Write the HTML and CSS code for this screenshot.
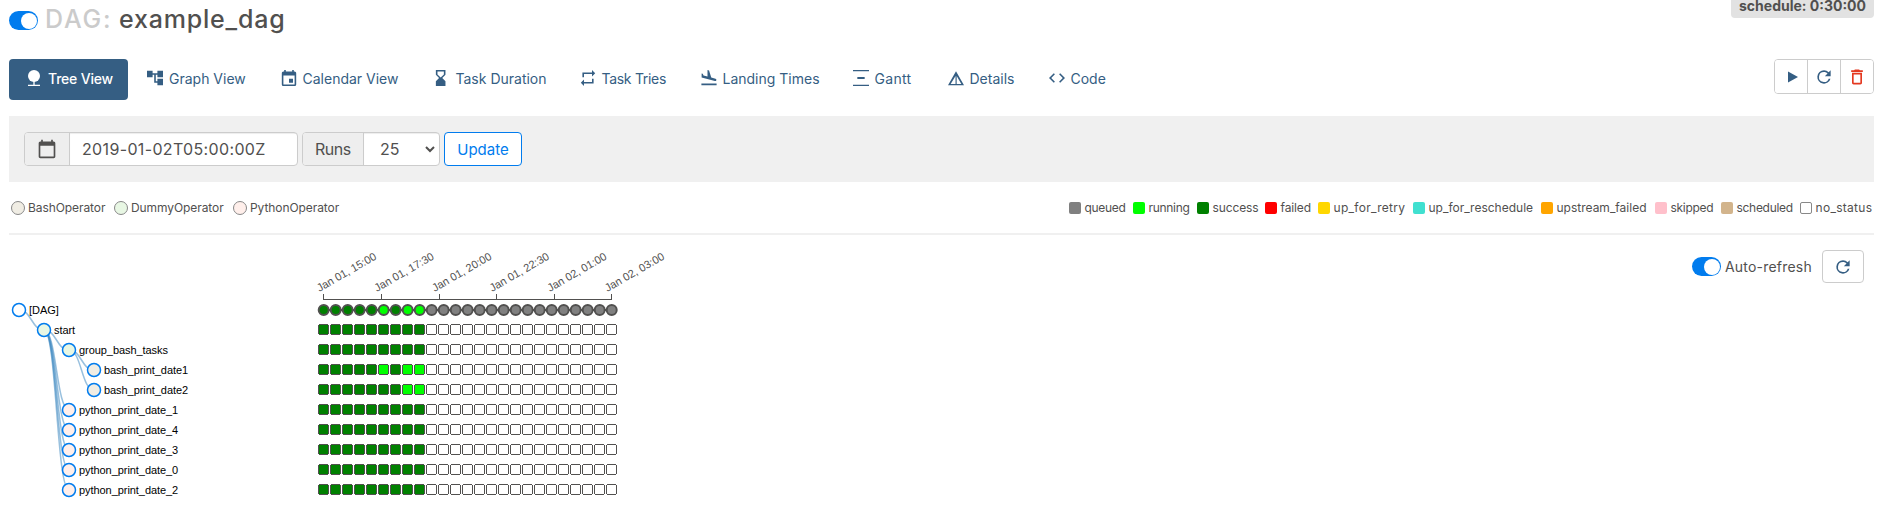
FILE: index.html
```html
<!DOCTYPE html>
<html lang="en">
<head>
<meta charset="utf-8">
<title>example_dag - Tree View</title>
<link rel="stylesheet" href="styles.css">
</head>
<body>
<header class="page-head">
  <h1 class="title"><span class="switch"></span><span class="title-kind">DAG:</span><span class="title-name">example_dag</span></h1>
  <span class="schedule"><b>schedule: 0:30:00</b></span>
</header>
<div class="nav-row">
  <nav class="tabs">
    <a class="tab active"><svg class="ic" viewBox="0 0 24 24"><circle cx="12" cy="9" r="9"/><path d="M11 16h2v6h8v2H3v-2h8z"/></svg><span>Tree View</span></a>
    <a class="tab"><svg class="ic" viewBox="0 0 24 24"><path d="M22 11V3h-7v3H9V3H2v8h7V8h2v10h4v3h7v-8h-7v3h-2V8h2v3z" transform="translate(-2.4 -2.4) scale(1.2)"/></svg><span>Graph View</span></a>
    <a class="tab"><svg class="ic" viewBox="0 0 24 24"><path d="M17 12h-5v5h5v-5zM16 1v2H8V1H6v2H5c-1.11 0-1.99.9-1.99 2L3 19c0 1.1.89 2 2 2h14c1.1 0 2-.9 2-2V5c0-1.1-.9-2-2-2h-1V1h-2zm3 18H5V8h14v11z" transform="translate(-2.4 -1.2) scale(1.2)"/></svg><span>Calendar View</span></a>
    <a class="tab"><svg class="ic" viewBox="0 0 24 24"><path d="M6 2v6h.01L6 8.010 10 12l-4 4 .01.01H6V22h12v-5.990h-.01L18 16l-4-4 4-3.990-.01-.01H18V2H6zm10 5.500-4 4-4-4V4h8z" transform="translate(-4.400 -2.400) scale(1.200)"/></svg><span>Task Duration</span></a>
    <a class="tab tighter"><svg class="ic" viewBox="0 0 24 24"><path d="M7 7h10v3l4-4-4-4v3H5v6h2V7zm10 10H7v-3l-4 4 4 4v-3h12v-6h-2v4z" transform="translate(-2.400 -2.400) scale(1.200)"/></svg><span>Task Tries</span></a>
    <a class="tab"><svg class="ic" viewBox="0 0 24 24"><path d="M2.500 19h19v2h-19v-2zm16.840-3.150c.8.210 1.620-.260 1.840-1.060.210-.8-.260-1.620-1.060-1.840l-5.310-1.420-2.760-9.020L10.120 2v8.280L5.150 8.950l-.930-2.320-1.450-.390v5.170l16.570 4.440z" transform="translate(-2.400 -2.400) scale(1.200)"/></svg><span>Landing Times</span></a>
    <a class="tab loose"><svg class="ic" viewBox="0 0 24 24"><path d="M0 0h24v2H0zM6.500 10.500h11v3h-11zM0 22h24v2H0z"/></svg><span>Gantt</span></a>
    <a class="tab"><svg class="ic" viewBox="0 0 24 24"><path d="M12 2 0 23h24zM11.300 9v12H4zM13 9l7 12h-7z" fill-rule="evenodd"/></svg><span>Details</span></a>
    <a class="tab"><svg class="ic" viewBox="0 0 24 24"><path d="M9.400 16.600 4.800 12l4.600-4.600L8 6l-6 6 6 6 1.400-1.400zm5.200 0 4.600-4.600-4.600-4.600L16 6l6 6-6 6-1.400-1.400z" transform="translate(-2.400 -2.400) scale(1.200)"/></svg><span>Code</span></a>
  </nav>
  <div class="actions">
    <button class="act"><svg width="16" height="16" viewBox="0 0 16 16"><path d="M5 2.500v11L15 8z"/></svg></button>
    <button class="act"><svg width="20" height="20" viewBox="0 0 24 24"><path d="M17.650 6.350A7.958 7.958 0 0 0 12 4a8 8 0 1 0 7.730 10h-2.080A6 6 0 1 1 12 6c1.660 0 3.140.690 4.220 1.780L13 11h7V4z"/></svg></button>
    <button class="act danger"><svg width="20" height="20" viewBox="0 0 24 24"><path d="M6 19c0 1.100.9 2 2 2h8c1.100 0 2-.9 2-2V7H6v12zM8 9h8v10H8V9zm7.500-5-1-1h-5l-1 1H5v2h14V4z"/></svg></button>
  </div>
</div>
<form class="filters">
  <div class="group date-group">
    <span class="addon"><svg width="20" height="20" viewBox="0 0 24 24"><path d="M20 3h-1V1h-2v2H7V1H5v2H4c-1.100 0-2 .9-2 2v16c0 1.100.9 2 2 2h16c1.100 0 2-.9 2-2V5c0-1.100-.9-2-2-2zm0 18H4V8h16v13z"/></svg></span>
    <span class="field"><span class="date">2019-01-02T05:00:00Z</span></span>
  </div>
  <div class="group runs-group">
    <span class="addon"><span class="runs">Runs</span></span>
    <span class="field"><span>25</span><svg width="10" height="7" viewBox="0 0 10 7"><path class="chevron" d="M1 1l4 4 4-4"/></svg></span>
  </div>
  <button class="update" type="button">Update</button>
</form>
<div class="legend">
  <div class="operators">
    <span class="op"><i class="op-bash"></i><span>BashOperator</span></span>
    <span class="op"><i class="op-dummy"></i><span>DummyOperator</span></span>
    <span class="op"><i class="op-python"></i><span>PythonOperator</span></span>
  </div>
  <div class="states">
    <span class="st tighter"><i class="queued"></i><span>queued</span></span>
    <span class="st tighter"><i class="running"></i><span>running</span></span>
    <span class="st tight"><i class="success"></i><span>success</span></span>
    <span class="st tight"><i class="failed"></i><span>failed</span></span>
    <span class="st loose"><i class="retry"></i><span>up_for_retry</span></span>
    <span class="st"><i class="reschedule"></i><span>up_for_reschedule</span></span>
    <span class="st"><i class="upstream"></i><span>upstream_failed</span></span>
    <span class="st tighter"><i class="skipped"></i><span>skipped</span></span>
    <span class="st tighter"><i class="scheduled"></i><span>scheduled</span></span>
    <span class="st loose"><i class="none"></i><span>no_status</span></span>
  </div>
</div>
<main class="tree">
  <svg id="chart" class="chart" width="700" height="290" viewBox="0 235 700 290"></svg>
  <div class="refresh">
    <span class="switch"></span><span class="auto">Auto-refresh</span>
    <button class="refresh-btn"><svg width="20" height="20" viewBox="0 0 24 24"><path d="M17.650 6.350A7.958 7.958 0 0 0 12 4a8 8 0 1 0 7.730 10h-2.080A6 6 0 1 1 12 6c1.660 0 3.140.690 4.220 1.780L13 11h7V4z"/></svg></button>
  </div>
</main>
<script src="tree.js"></script>
</body>
</html>
```
FILE: styles.css
```css
* { box-sizing: border-box; }
body { margin: 0; padding: 0 19px 0 9px; height: 529px; overflow: hidden; background: #fff; color: #51504f; font-family: Inter, "Liberation Sans", sans-serif; font-size: 14px; }
button { margin: 0; padding: 0; font: inherit; background: #fff; }
svg { display: block; fill: currentColor; }

.page-head { display: flex; justify-content: space-between; align-items: flex-start; height: 59px; }
.title { display: flex; align-items: center; margin: 0; height: 41px; font-size: 25px; font-weight: 500; line-height: 38px; letter-spacing: .8px; }
.title span:not(.switch) { margin-top: -4px; }
.title-kind { width: 74px; margin-left: 7px; color: #cbcbcb; letter-spacing: 1.8px; }
.switch { flex: none; width: 29px; height: 19px; padding: 1.5px; border-radius: 10px; background: #017cee; }
.switch::after { content: ""; display: block; width: 16px; height: 16px; margin-left: 10px; border-radius: 50%; background: #fff; }
.schedule { width: 143px; height: 18px; padding-left: 8px; border-radius: 0 0 4px 4px; background: #e2e2e2; line-height: 12px; white-space: nowrap; }

.nav-row { display: flex; justify-content: space-between; align-items: flex-start; height: 57px; }
.tabs { display: grid; grid-template-columns: 119px 133.5px 153px 146px 121px 152px 95px 101px 100px; color: #355e83; }
.tab { display: flex; align-items: center; height: 41px; padding: 0 0 3px 19px; white-space: nowrap; }
.tab.active { padding-left: 17px; color: #fff; background: #355e83; border-radius: 4px; font-weight: 500; letter-spacing: -.2px; }
.tight { letter-spacing: -.12px; }
.tighter { letter-spacing: -.3px; }
.loose { letter-spacing: .3px; }
.ic { flex: none; width: 16px; height: 16px; margin-right: 6px; overflow: visible; }
.actions { display: flex; width: 100px; height: 35px; border: 1px solid #ccc; border-radius: 4px; overflow: hidden; }
.act { display: flex; flex: 1; align-items: center; justify-content: center; border: 0; border-left: 1px solid #ccc; color: #355e83; }
.act:first-child { border-left: 0; }
.danger { color: #e43921; }

.filters { display: flex; height: 66px; padding: 16px 15px; background: #f0f0f0; }
.group { display: flex; height: 34px; border: 1px solid #ccc; border-radius: 4px; background: #fff; font-size: 16px; overflow: hidden; }
.date-group { width: 274px; margin-right: 4px; }
.runs-group { width: 138px; margin-right: 4px; }
.addon { display: flex; flex: none; align-items: center; width: 45px; padding-left: 12px; border-right: 1px solid #ccc; background: #eee; }
.runs-group .addon { width: 61px; padding-left: 12px; }
.runs { letter-spacing: -.5px; }
.date { letter-spacing: .35px; }
.field { display: flex; flex: 1; align-items: center; padding-left: 12px; box-shadow: inset 0 1px 1px rgba(0, 0, 0, .075); }
.runs-group .field { justify-content: space-between; padding: 0 4px 0 16px; }
.chevron { fill: none; stroke: #51504f; stroke-width: 2; }
.update { width: 78px; height: 34px; border: 1px solid #017cee; border-radius: 4px; color: #017cee; font-size: 15px; }

.legend { display: flex; justify-content: space-between; height: 53px; border-bottom: 2px solid #f0f0f0; font-size: 12px; }
.operators, .states { display: grid; align-items: center; white-space: nowrap; }
.operators { grid-template-columns: 103px 119px 110px; padding-left: 2px; letter-spacing: -.08px; }
.states { grid-template-columns: 64px 64px 68px 53px 95px 128px 114px 66px 79px 74px; }
.op, .st { display: flex; align-items: center; }
.op i { width: 14px; height: 14px; margin-right: 3px; border: 1px solid #888; border-radius: 50%; }
.st i { width: 12px; height: 12px; margin-right: 3.5px; border-radius: 2px; }
.op-bash { background: #f0ede4; }
.op-dummy { background: #e8f7e4; }
.op-python { background: #ffefeb; }
.queued { background: gray; }
.running { background: lime; }
.success { background: green; }
.failed { background: red; }
.retry { background: gold; }
.reschedule { background: turquoise; }
.upstream { background: orange; }
.skipped { background: pink; }
.scheduled { background: tan; }
.none { border: 1px solid #888; background: #fff; }

.tree { display: flex; justify-content: space-between; align-items: flex-start; }
.chart { margin-left: -9px; font-family: "Liberation Sans", Arial, sans-serif; }
.refresh { display: flex; align-items: center; height: 33px; margin: 15px 10px 0 0; }
.auto { width: 101px; padding-left: 4px; letter-spacing: .2px; }
.refresh-btn { display: flex; align-items: center; justify-content: center; width: 42px; height: 33px; border: 1px solid #ccc; border-radius: 4px; color: #355e83; }

.link { fill: none; stroke: #3182bd; stroke-opacity: .5; stroke-width: 1.5px; }
.node { stroke: #017cee; stroke-width: 1.5px; }
.label { fill: #000; font-size: 11px; letter-spacing: -.06px; }
.axis { fill: none; stroke: #51504f; shape-rendering: crispEdges; }
.tick { fill: #51504f; font-size: 11px; }
.run { stroke: #51504f; stroke-width: 2px; }
.task { stroke: #51504f; shape-rendering: crispEdges; }
```
FILE: tree.js
```js
const chart = document.getElementById("chart");
const fills = { dag: "#fff", dummy: "#e8f7e4", bash: "#f0ede4", python: "#ffefeb", s: "green", r: "lime", q: "gray", n: "#fff" };

function add(tag, attrs, text) {
  const el = document.createElementNS("http://www.w3.org/2000/svg", tag);
  for (const key in attrs) el.setAttribute(key, attrs[key]);
  if (text) el.textContent = text;
  chart.appendChild(el);
}

// name, depth, parent row, operator, states of the runs that have started
const rows = [
  ["[DAG]", 0, -1, "dag", "sssssrsrr"],
  ["start", 1, 0, "dummy", "sssssssss"],
  ["group_bash_tasks", 2, 1, "dummy", "sssssssss"],
  ["bash_print_date1", 3, 2, "bash", "sssssrsrr"],
  ["bash_print_date2", 3, 2, "bash", "sssssssrr"],
  ["python_print_date_1", 2, 1, "python", "sssssssss"],
  ["python_print_date_4", 2, 1, "python", "sssssssss"],
  ["python_print_date_3", 2, 1, "python", "sssssssss"],
  ["python_print_date_0", 2, 1, "python", "sssssssss"],
  ["python_print_date_2", 2, 1, "python", "sssssssss"]
];
const nodeX = depth => 19 + depth * 25;
const nodeY = row => 310 + row * 20;

rows.forEach(([, depth, parent], i) => {
  if (parent < 0) return;
  const x0 = nodeX(rows[parent][1]), x1 = nodeX(depth), mid = (x0 + x1) / 2;
  add("path", { class: "link", d: `M${x0},${nodeY(parent)}C${mid},${nodeY(parent)} ${mid},${nodeY(i)} ${x1},${nodeY(i)}` });
});

add("path", { class: "run", d: "M323.7 310H611.7" });
rows.forEach(([name, depth, , type, states], i) => {
  const x = nodeX(depth), y = nodeY(i);
  add("circle", { class: "node", cx: x, cy: y, r: 6.5, fill: fills[type] });
  add("text", { class: "label", x: x + 10, y: y + 4 }, name);
  for (let k = 0; k < 25; k++) {
    const state = states[k] || (i ? "n" : "q");
    if (i) add("rect", { class: "task", x: 318.5 + k * 12, y: y - 5.5, width: 10, height: 10, rx: 2, fill: fills[state] });
    else add("circle", { class: "run", cx: 323.7 + k * 12, cy: y, r: 5, fill: fills[state] });
  }
});

add("path", { class: "axis", d: "M323.5 294V299.5H611.5V294M381.5 294v5M439.5 294v5M496.5 294v5M554.5 294v5" });
["Jan 01, 15:00", "Jan 01, 17:30", "Jan 01, 20:00", "Jan 01, 22:30", "Jan 02, 01:00", "Jan 02, 03:00"].forEach((label, i) => {
  add("text", { class: "tick", transform: `translate(${319.5 + i * 57.6} 292) rotate(-30)` }, label);
});
```
